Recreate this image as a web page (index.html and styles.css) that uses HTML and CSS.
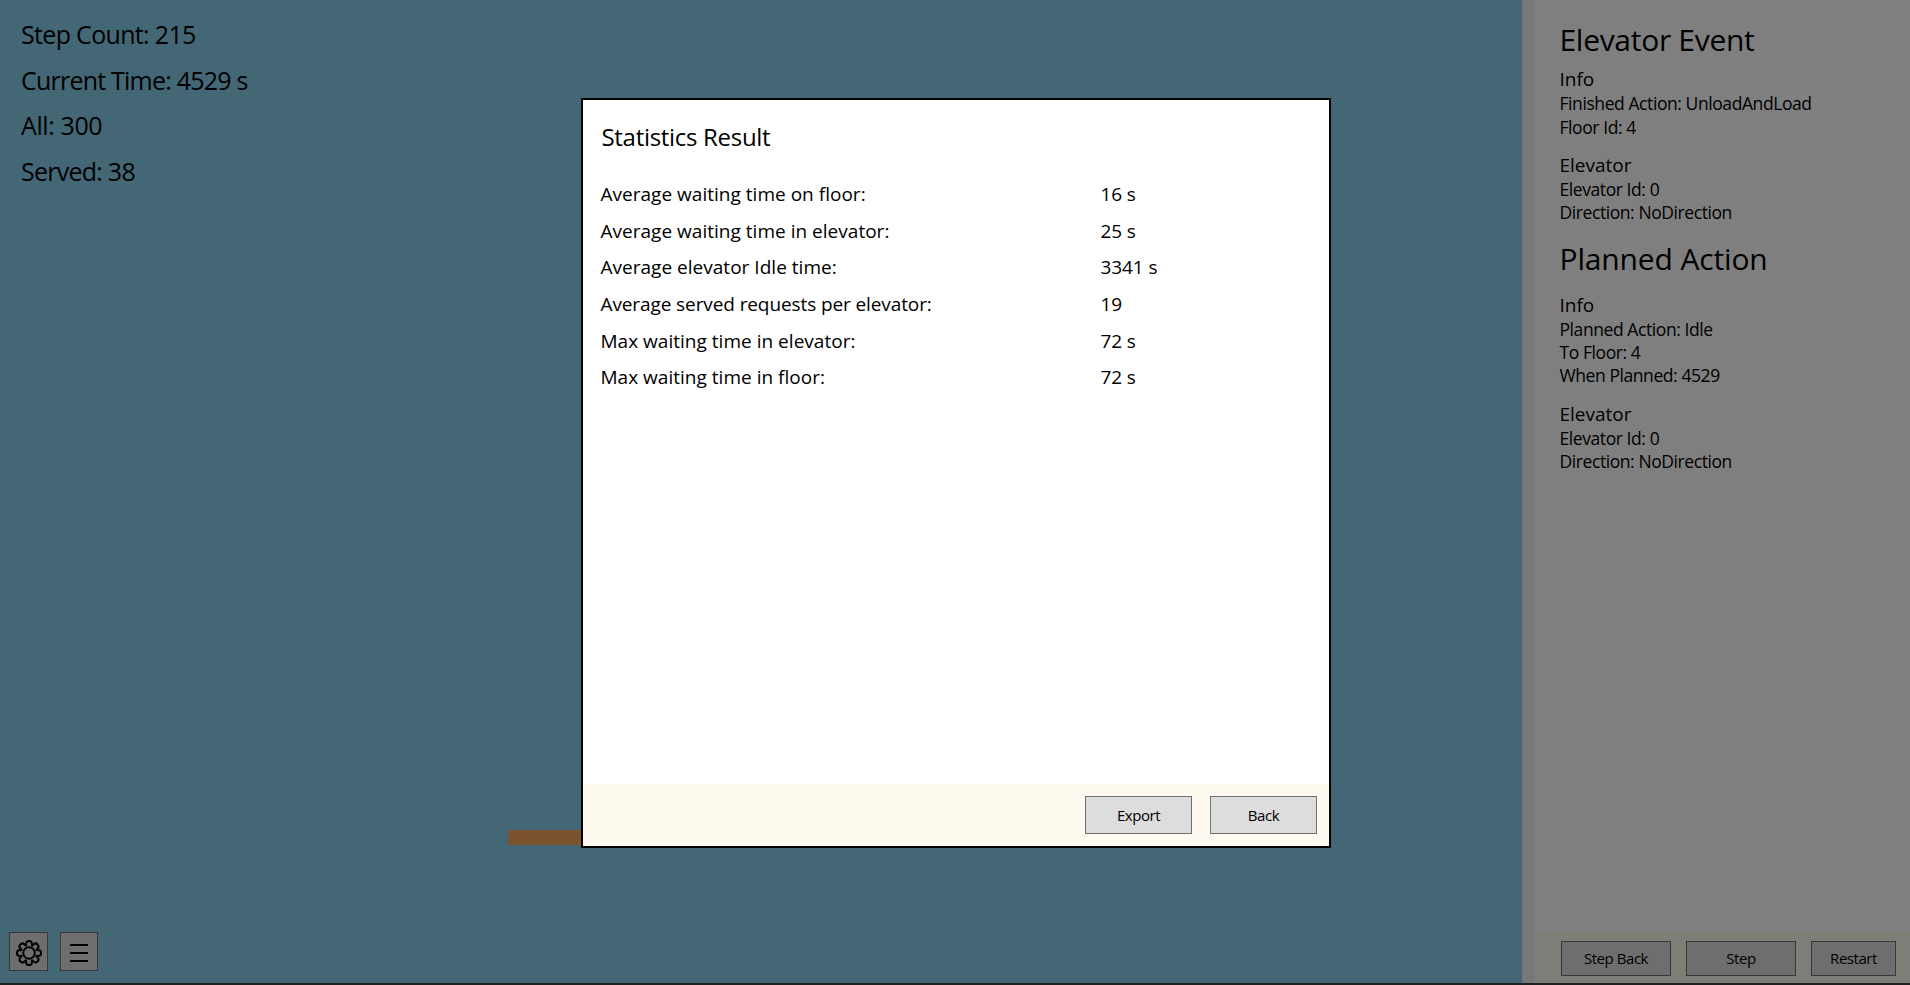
FILE: index.html
```html
<!DOCTYPE html>
<html lang="en">
<head>
<meta charset="utf-8">
<title>Elevator Simulation</title>
<link rel="stylesheet" href="styles.css">
</head>
<body>
<div class="app">
  <main class="scene">
    <div class="stats">
      <div class="s1">Step Count: 215</div>
      <div class="s2">Current Time: 4529 s</div>
      <div class="s3">All: 300</div>
      <div class="s4">Served: 38</div>
    </div>
    <div class="floor"></div>
    <div class="tools">
      <button class="tool"><svg class="gear" width="30" height="30" viewBox="-15 -15 30 30" fill="none" stroke="#000" stroke-width="2"><defs><path id="lobe" d="M-2.9 -9.2A2.9 2.9 0 0 1 2.9 -9.2Q2.5 -5.8 4.45 -8.56"/></defs><use href="#lobe"/><use href="#lobe" transform="rotate(45)"/><use href="#lobe" transform="rotate(90)"/><use href="#lobe" transform="rotate(135)"/><use href="#lobe" transform="rotate(180)"/><use href="#lobe" transform="rotate(225)"/><use href="#lobe" transform="rotate(270)"/><use href="#lobe" transform="rotate(315)"/><circle r="5.8"/></svg></button>
      <button class="tool menu"><svg width="30" height="30" viewBox="0 0 30 30" stroke="#000" stroke-width="2"><path d="M6 8H24M6 16H24M6 24H24"/></svg></button>
    </div>
  </main>
  <div class="splitter"></div>
  <aside class="panel">
    <div class="details">
      <h1 class="h-event">Elevator Event</h1>
      <section class="info">
        <h2>Info</h2>
        <p>Finished Action: UnloadAndLoad</p>
        <p>Floor Id: 4</p>
      </section>
      <section class="elevator">
        <h2>Elevator</h2>
        <p>Elevator Id: 0</p>
        <p>Direction: NoDirection</p>
      </section>
      <h1 class="h-plan">Planned Action</h1>
      <section class="plan">
        <h2>Info</h2>
        <p>Planned Action: Idle</p>
        <p>To Floor: 4</p>
        <p>When Planned: 4529</p>
      </section>
      <section class="elevator">
        <h2>Elevator</h2>
        <p>Elevator Id: 0</p>
        <p>Direction: NoDirection</p>
      </section>
    </div>
    <footer class="actions">
      <button class="btn">Step Back</button>
      <button class="btn">Step</button>
      <button class="btn narrow">Restart</button>
    </footer>
  </aside>
</div>
<div class="overlay">
  <div class="dialog">
    <div class="dialog-body">
      <div class="dialog-title">Statistics Result</div>
      <div class="rows">
        <span class="wide">Average waiting time on floor:</span><span>16 s</span>
        <span class="wide">Average waiting time in elevator:</span><span>25 s</span>
        <span class="wide">Average elevator Idle time:</span><span>3341 s</span>
        <span>Average served requests per elevator:</span><span>19</span>
        <span class="wide">Max waiting time in elevator:</span><span>72 s</span>
        <span class="wide">Max waiting time in floor:</span><span>72 s</span>
      </div>
    </div>
    <div class="dialog-footer">
      <button class="btn">Export</button>
      <button class="btn">Back</button>
    </div>
  </div>
</div>
</body>
</html>
```
FILE: styles.css
```css
* { box-sizing: border-box; }
body { margin: 0; height: 985px; overflow: hidden; font-family: "Open Sans", "Noto Sans", sans-serif; color: #000; }
h1, h2, p { margin: 0; font-weight: 400; white-space: nowrap; }
button { font-family: inherit; color: #000; background: #ddd; border: 1px solid #707070; padding: 0; }
.app { display: flex; height: 985px; border-bottom: 2px solid #404040; }
.scene { width: 1522px; background: #87ceeb; display: flex; flex-direction: column; }
.stats { padding: 12px 0 0 21px; font-size: 25px; line-height: 45.7px; height: 830px; }
.s1 { letter-spacing: -0.67px; }
.s2 { letter-spacing: -0.78px; }
.s3 { letter-spacing: -0.4px; }
.s4 { letter-spacing: -0.75px; }
.floor { width: 500px; height: 15px; margin-left: 508px; background: #f4a460; }
.tools { display: flex; gap: 12px; padding: 87px 0 0 9px; }
.tool { width: 39px; height: 39px; display: flex; align-items: center; justify-content: center; }
.tool.menu { width: 38px; }
.gear { margin: 2px 0 0 0; }
.splitter { width: 13px; background: #f0f0f0; }
.panel { flex: 1; background: #fff; display: flex; flex-direction: column; }
.details { flex: 1; padding: 19px 0 0 24.5px; }
h1 { font-size: 30px; line-height: 42px; letter-spacing: -0.3px; }
h2 { font-size: 19px; line-height: 24px; margin-bottom: 1px; }
p { font-size: 17.5px; line-height: 23.3px; letter-spacing: -0.42px; }
.info { margin-top: 5.5px; }
.info h2 { margin-bottom: 0; }
.info p { line-height: 24px; }
.info + .elevator { margin-top: 14.1px; }
.elevator { margin-top: 14.5px; }
.h-plan { margin-top: 14px; letter-spacing: -0.15px; }
.plan { margin-top: 13px; }
.plan p { line-height: 23px; }
.plan + .elevator { margin-top: 14.4px; }
.actions { height: 50px; background: #fffaf0; display: flex; gap: 15px; padding: 8px 0 0 26px; }
.btn { width: 110px; height: 35px; font-size: 15px; letter-spacing: -0.45px; padding-bottom: 2px; }
.actions .narrow { width: 85px; }
.overlay { position: absolute; inset: 0; background: rgba(0, 0, 0, 0.5); padding: 98px 0 0 581px; }
.dialog { width: 750px; height: 750px; border: 2px solid #000; background: #fff; display: flex; flex-direction: column; }
.dialog-body { flex: 1; padding: 17px 0 0 17.5px; }
.dialog-title { font-size: 24px; line-height: 40px; letter-spacing: -0.3px; padding-left: 1px; }
.rows { display: grid; grid-template-columns: 500px 1fr; margin-top: 19.2px; font-size: 19px; line-height: 36.6px; letter-spacing: -0.1px; }
.wide { letter-spacing: 0.02px; }
.dialog-footer { height: 62px; background: #fffaf0; display: flex; gap: 18px; justify-content: flex-end; padding: 12px 12px 0 0; }
.dialog-footer .btn { width: 107px; height: 38px; padding-bottom: 0; }
```
